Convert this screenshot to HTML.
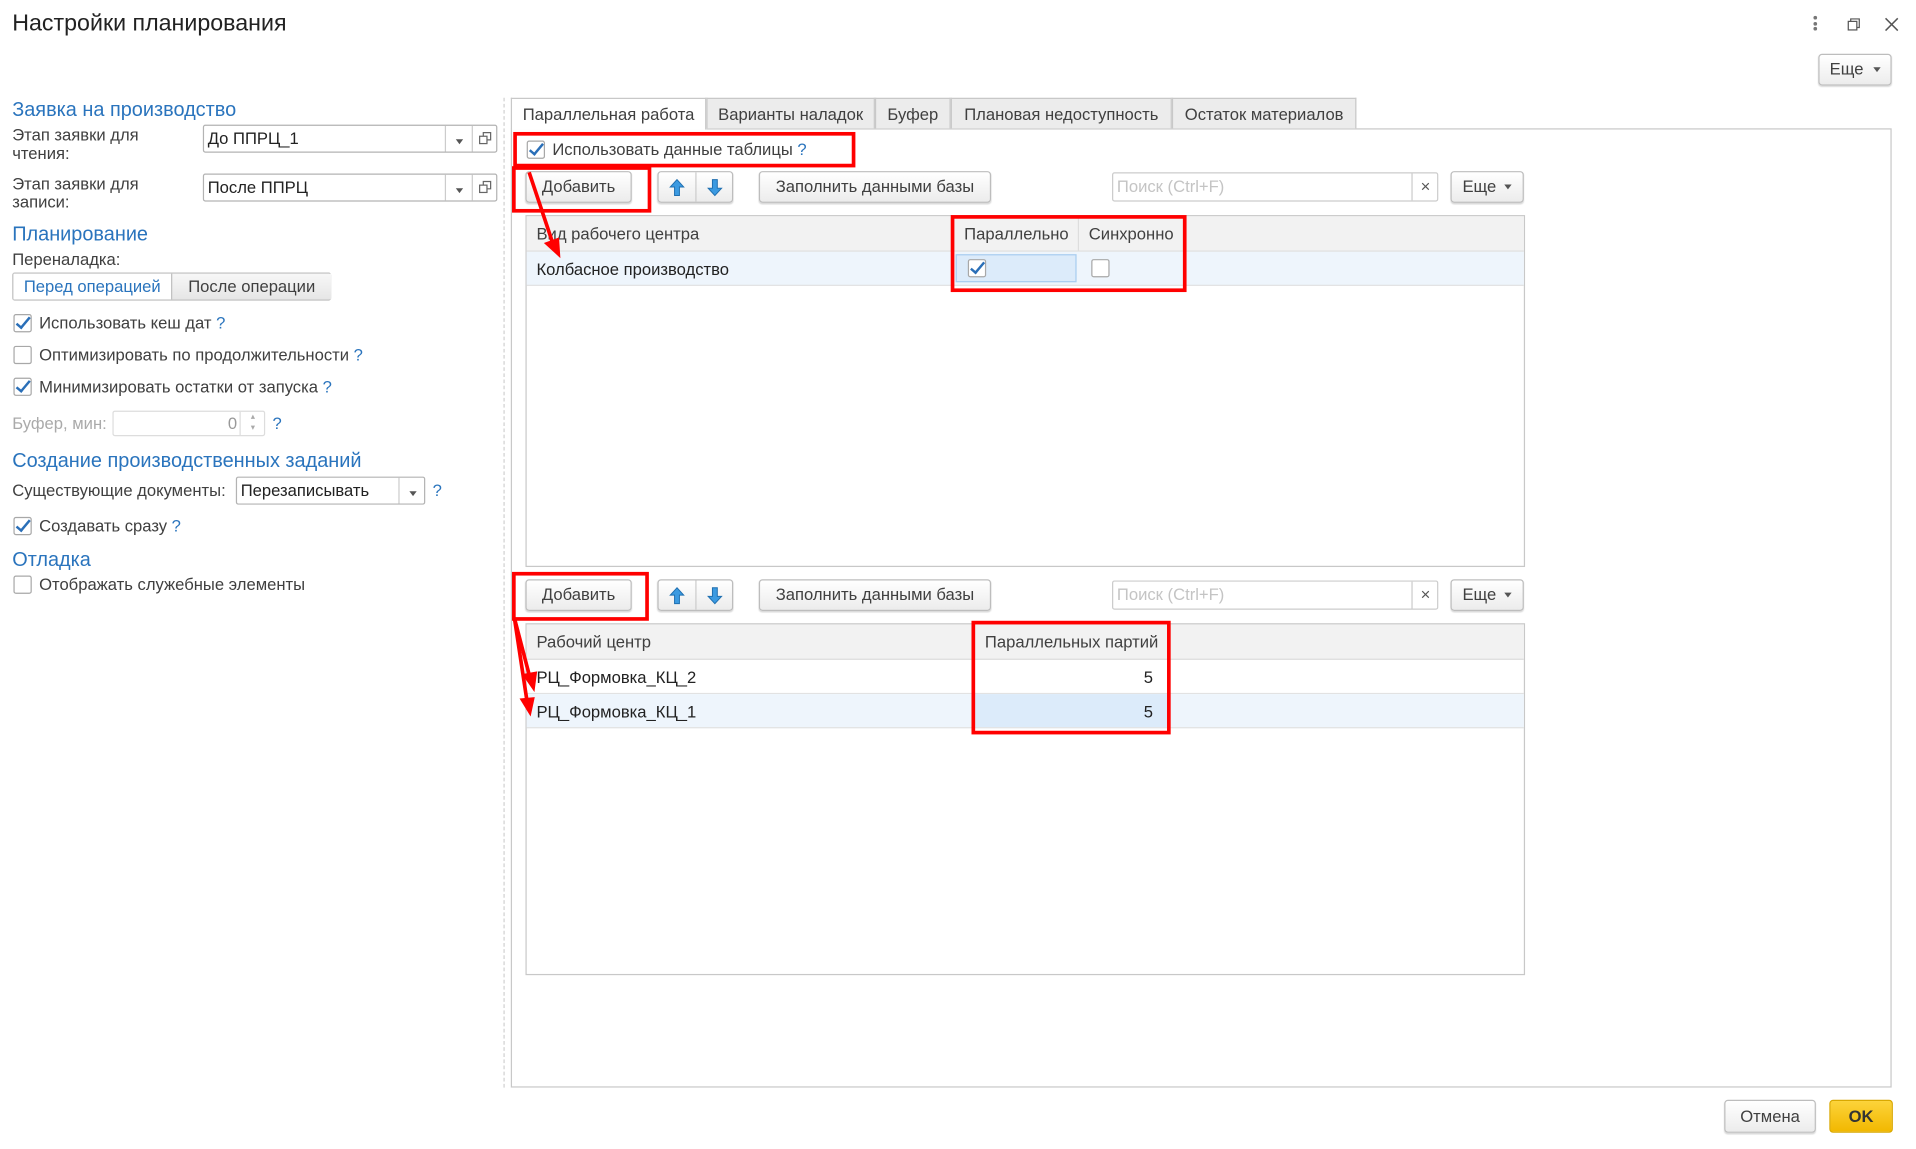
<!DOCTYPE html>
<html><head><meta charset="utf-8">
<style>
html,body{margin:0;padding:0;background:#fff;overflow:hidden;width:1916px;height:1148px}
#w{position:absolute;left:0;top:0;width:1568px;height:940px;transform:scale(1.222);transform-origin:0 0;font-family:"Liberation Sans",Arial,sans-serif;font-size:13.6px;color:#333}
.a{position:absolute}
.h{color:#2a74bd;font-size:16.3px;white-space:nowrap}
.t{white-space:nowrap;color:#404040}
.q{color:#2a74bd}
.cb{position:absolute;width:13px;height:13px;border:1px solid #a8a8a8;border-radius:2px;background:#fff}
.cb.on::after{content:"";position:absolute;left:4px;top:-1px;width:4px;height:10px;border:solid #2a6fb8;border-width:0 2.5px 2.5px 0;transform:rotate(40deg)}
.btn{position:absolute;border:1px solid #bdbdbd;border-radius:3px;background:linear-gradient(#fff,#ececec);box-shadow:0 1px 1px rgba(0,0,0,.15);text-align:center;color:#404040;white-space:nowrap;box-sizing:border-box}
.fld{position:absolute;border:1px solid #b3b3b3;border-radius:2px;background:#fff;box-sizing:border-box;white-space:nowrap}
.red{position:absolute;border:3px solid #f00;box-sizing:border-box}
.tab{position:absolute;top:80px;height:25px;line-height:25px;border:1px solid #c8c8c8;border-bottom:none;background:#ececec;text-align:center;box-sizing:border-box;color:#404040;white-space:nowrap}
.tri{display:inline-block;width:0;height:0;border-left:3px solid transparent;border-right:3px solid transparent;border-top:4px solid #555}
</style></head><body><div id="w">

<div class="a" style="left:10px;top:9px;font-size:19px;color:#222">Настройки планирования</div>
<div class="a" style="left:1484px;top:13px;width:3px"><div style="width:3px;height:3px;background:#777;border-radius:2px;margin-bottom:1.5px"></div><div style="width:3px;height:3px;background:#777;border-radius:2px;margin-bottom:1.5px"></div><div style="width:3px;height:3px;background:#777;border-radius:2px"></div></div>
<svg class="a" style="left:1511px;top:14px" width="12" height="12"><rect x="1.5" y="3.5" width="7" height="7" fill="none" stroke="#555"/><path d="M3.5 3.5V1.5h7v7h-2" fill="none" stroke="#555"/></svg>
<svg class="a" style="left:1542px;top:14px" width="12" height="12"><path d="M1 1L11 11M11 1L1 11" stroke="#555" stroke-width="1.2"/></svg>
<div class="btn" style="left:1488px;top:44px;width:60px;height:26px;line-height:24px">Еще <span class="tri" style="margin-left:4px;vertical-align:middle"></span></div>

<!-- left -->
<div class="a h" style="left:10px;top:81px">Заявка на производство</div>
<div class="a t" style="left:10px;top:103px;line-height:15px">Этап заявки для<br>чтения:</div>
<div class="fld" style="left:166px;top:102px;width:241px;height:23px;line-height:21px;padding-left:3px;color:#222">До ППРЦ_1
 <div class="a" style="left:197px;top:0;height:21px;border-left:1px solid #ccc;width:22px;text-align:center"><span class="tri"></span></div>
 <div class="a" style="left:219px;top:0;height:21px;border-left:1px solid #ccc;width:21px"><svg width="20" height="21"><rect x="5.5" y="8.5" width="6" height="6" fill="none" stroke="#666"/><path d="M8.5 8.5V5.5h6v6h-3" fill="none" stroke="#666"/></svg></div></div>
<div class="a t" style="left:10px;top:143px;line-height:15px">Этап заявки для<br>записи:</div>
<div class="fld" style="left:166px;top:142px;width:241px;height:23px;line-height:21px;padding-left:3px;color:#222">После ППРЦ
 <div class="a" style="left:197px;top:0;height:21px;border-left:1px solid #ccc;width:22px;text-align:center"><span class="tri"></span></div>
 <div class="a" style="left:219px;top:0;height:21px;border-left:1px solid #ccc;width:21px"><svg width="20" height="21"><rect x="5.5" y="8.5" width="6" height="6" fill="none" stroke="#666"/><path d="M8.5 8.5V5.5h6v6h-3" fill="none" stroke="#666"/></svg></div></div>
<div class="a h" style="left:10px;top:183px">Планирование</div>
<div class="a t" style="left:10px;top:205px">Переналадка:</div>
<div class="a" style="left:10px;top:223px;width:261px;height:23px;border:1px solid #bdbdbd;border-radius:2px;box-sizing:border-box">
 <div class="a" style="left:0;top:0;width:129px;height:21px;line-height:21px;text-align:center;color:#2a74bd;background:#fff">Перед операцией</div>
 <div class="a" style="left:129px;top:0;width:130px;height:21px;line-height:21px;text-align:center;background:linear-gradient(#f7f7f7,#e6e6e6);border-left:1px solid #bdbdbd;color:#404040">После операции</div></div>
<div class="cb on" style="left:11px;top:257px"></div><div class="a t" style="left:32px;top:257px">Использовать кеш дат <span class="q">?</span></div>
<div class="cb" style="left:11px;top:283px"></div><div class="a t" style="left:32px;top:283px">Оптимизировать по продолжительности <span class="q">?</span></div>
<div class="cb on" style="left:11px;top:309px"></div><div class="a t" style="left:32px;top:309px">Минимизировать остатки от запуска <span class="q">?</span></div>
<div class="a t" style="left:10px;top:339px;color:#aaa">Буфер, мин:</div>
<div class="fld" style="left:92px;top:336px;width:125px;height:21px;border-color:#ddd;color:#999">
 <div class="a" style="right:22px;top:2px">0</div>
 <div class="a" style="left:103px;top:0;width:20px;height:19px;border-left:1px solid #ddd;font-size:7px;color:#aaa;text-align:center;line-height:9px">▴<br>▾</div></div>
<div class="a q" style="left:223px;top:339px">?</div>
<div class="a h" style="left:10px;top:368px">Создание производственных заданий</div>
<div class="a t" style="left:10px;top:394px">Существующие документы:</div>
<div class="fld" style="left:193px;top:390px;width:155px;height:23px;line-height:21px;padding-left:3px;color:#222">Перезаписывать
 <div class="a" style="left:132px;top:0;height:21px;border-left:1px solid #ccc;width:22px;text-align:center"><span class="tri"></span></div></div>
<div class="a q" style="left:354px;top:394px">?</div>
<div class="cb on" style="left:11px;top:423px"></div><div class="a t" style="left:32px;top:423px">Создавать сразу <span class="q">?</span></div>
<div class="a h" style="left:10px;top:449px">Отладка</div>
<div class="cb" style="left:11px;top:471px"></div><div class="a t" style="left:32px;top:471px">Отображать служебные элементы</div>
<div class="a" style="left:412px;top:80px;height:810px;border-left:1px dashed #d0d0d0"></div>

<!-- tabs -->
<div class="a" style="left:418px;top:105px;width:1130px;height:785px;border:1px solid #c8c8c8;box-sizing:border-box"></div>
<div class="tab" style="left:418px;width:160px;background:#fff;height:26px">Параллельная работа</div>
<div class="tab" style="left:578px;width:138px">Варианты наладок</div>
<div class="tab" style="left:716px;width:62px">Буфер</div>
<div class="tab" style="left:778px;width:181px">Плановая недоступность</div>
<div class="tab" style="left:959px;width:151px">Остаток материалов</div>

<div class="cb on" style="left:431px;top:115px"></div><div class="a t" style="left:452px;top:115px">Использовать данные таблицы <span class="q">?</span></div>

<!-- toolbar 1 -->
<div class="btn" style="left:430px;top:140px;width:87px;height:26px;line-height:24px">Добавить</div>
<div class="btn" style="left:538px;top:140px;width:62px;height:26px"><div class="a" style="left:30px;top:0;height:24px;border-left:1px solid #ccc"></div>
 <svg class="a" style="left:8px;top:5px" width="14" height="15"><path d="M7 1L1.5 7H5V14H9V7H12.5Z" fill="#3b9ae1" stroke="#1f6fb0" stroke-width=".8"/></svg>
 <svg class="a" style="left:39px;top:5px" width="14" height="15"><path d="M7 14L1.5 8H5V1H9V8H12.5Z" fill="#3b9ae1" stroke="#1f6fb0" stroke-width=".8"/></svg></div>
<div class="btn" style="left:621px;top:140px;width:190px;height:26px;line-height:24px">Заполнить данными базы</div>
<div class="fld" style="left:910px;top:141px;width:267px;height:24px;line-height:22px;padding-left:3px;color:#c4c4c4;border-color:#ccc">Поиск (Ctrl+F)<div class="a" style="left:244px;top:0;width:21px;height:22px;border-left:1px solid #ccc;text-align:center;color:#555">×</div></div>
<div class="btn" style="left:1187px;top:140px;width:60px;height:26px;line-height:24px">Еще <span class="tri" style="margin-left:3px;vertical-align:middle"></span></div>

<!-- table 1 -->
<div class="a" style="left:430px;top:176px;width:818px;height:288px;border:1px solid #c8c8c8;box-sizing:border-box;background:#fff">
 <div class="a" style="left:0;top:0;width:816px;height:28px;background:#f2f2f2;border-bottom:1px solid #ddd"></div>
 <div class="a t" style="left:8px;top:7px">Вид рабочего центра</div>
 <div class="a" style="left:349px;top:0;height:28px;border-left:1px solid #ddd"></div>
 <div class="a t" style="left:358px;top:7px">Параллельно</div>
 <div class="a" style="left:451px;top:0;height:28px;border-left:1px solid #ddd"></div>
 <div class="a t" style="left:460px;top:7px">Синхронно</div>
 <div class="a" style="left:537px;top:0;height:28px;border-left:1px solid #ddd"></div>
 <div class="a" style="left:0;top:29px;width:816px;height:27px;background:#eef5fc;border-bottom:1px solid #e2e2e2"></div>
 <div class="a t" style="left:8px;top:36px;color:#222">Колбасное производство</div>
 <div class="a" style="left:351px;top:31px;width:99px;height:23px;background:#dcebfa;border:1px solid #a9cdf0;box-sizing:border-box"></div>
 <div class="cb on" style="left:361px;top:35px"></div>
 <div class="cb" style="left:462px;top:35px"></div>
</div>

<!-- toolbar 2 -->
<div class="btn" style="left:430px;top:474px;width:87px;height:26px;line-height:24px">Добавить</div>
<div class="btn" style="left:538px;top:474px;width:62px;height:26px"><div class="a" style="left:30px;top:0;height:24px;border-left:1px solid #ccc"></div>
 <svg class="a" style="left:8px;top:5px" width="14" height="15"><path d="M7 1L1.5 7H5V14H9V7H12.5Z" fill="#3b9ae1" stroke="#1f6fb0" stroke-width=".8"/></svg>
 <svg class="a" style="left:39px;top:5px" width="14" height="15"><path d="M7 14L1.5 8H5V1H9V8H12.5Z" fill="#3b9ae1" stroke="#1f6fb0" stroke-width=".8"/></svg></div>
<div class="btn" style="left:621px;top:474px;width:190px;height:26px;line-height:24px">Заполнить данными базы</div>
<div class="fld" style="left:910px;top:475px;width:267px;height:24px;line-height:22px;padding-left:3px;color:#c4c4c4;border-color:#ccc">Поиск (Ctrl+F)<div class="a" style="left:244px;top:0;width:21px;height:22px;border-left:1px solid #ccc;text-align:center;color:#555">×</div></div>
<div class="btn" style="left:1187px;top:474px;width:60px;height:26px;line-height:24px">Еще <span class="tri" style="margin-left:3px;vertical-align:middle"></span></div>

<!-- table 2 -->
<div class="a" style="left:430px;top:510px;width:818px;height:288px;border:1px solid #c8c8c8;box-sizing:border-box;background:#fff">
 <div class="a" style="left:0;top:0;width:816px;height:28px;background:#f2f2f2;border-bottom:1px solid #ddd"></div>
 <div class="a t" style="left:8px;top:7px">Рабочий центр</div>
 <div class="a" style="left:366px;top:0;height:28px;border-left:1px solid #ddd"></div>
 <div class="a t" style="left:375px;top:7px">Параллельных партий</div>
 <div class="a" style="left:525px;top:0;height:28px;border-left:1px solid #ddd"></div>
 <div class="a" style="left:0;top:29px;width:816px;height:27px;border-bottom:1px solid #e2e2e2"></div>
 <div class="a t" style="left:8px;top:36px;color:#222">РЦ_Формовка_КЦ_2</div>
 <div class="a t" style="left:505px;top:36px;color:#222">5</div>
 <div class="a" style="left:0;top:57px;width:816px;height:27px;background:#eef5fc;border-bottom:1px solid #e2e2e2"></div>
 <div class="a" style="left:367px;top:57px;width:158px;height:27px;background:#dcebfa"></div>
 <div class="a t" style="left:8px;top:64px;color:#222">РЦ_Формовка_КЦ_1</div>
 <div class="a t" style="left:505px;top:64px;color:#222">5</div>
</div>

<!-- red highlights -->
<div class="red" style="left:420px;top:108px;width:280px;height:29px"></div>
<div class="red" style="left:419px;top:136px;width:114px;height:38px"></div>
<div class="red" style="left:778px;top:176px;width:193px;height:63px"></div>
<div class="red" style="left:419px;top:468px;width:112px;height:40px"></div>
<div class="red" style="left:795px;top:508px;width:163px;height:93px"></div>
<svg class="a" style="left:0;top:0" width="1568" height="940">
 <g stroke="#f00" stroke-width="3" fill="#f00">
  <line x1="433" y1="141" x2="452" y2="198"/>
  <polygon points="458,210 446,199 457,195" stroke-width="1"/>
  <line x1="421" y1="506" x2="433" y2="552"/>
  <polygon points="437,565 428,552 439,550" stroke-width="1"/>
  <line x1="421" y1="506" x2="431" y2="572"/>
  <polygon points="434,585 426,572 437,571" stroke-width="1"/>
 </g>
</svg>

<!-- bottom -->
<div class="btn" style="left:1411px;top:900px;width:75px;height:27px;line-height:25px">Отмена</div>
<div class="a" style="left:1497px;top:900px;width:52px;height:27px;line-height:25px;border:1px solid #d9a800;border-radius:3px;background:linear-gradient(#fcd33a,#f2b800);text-align:center;font-weight:bold;color:#333;box-sizing:border-box">OK</div>

</div></body></html>
